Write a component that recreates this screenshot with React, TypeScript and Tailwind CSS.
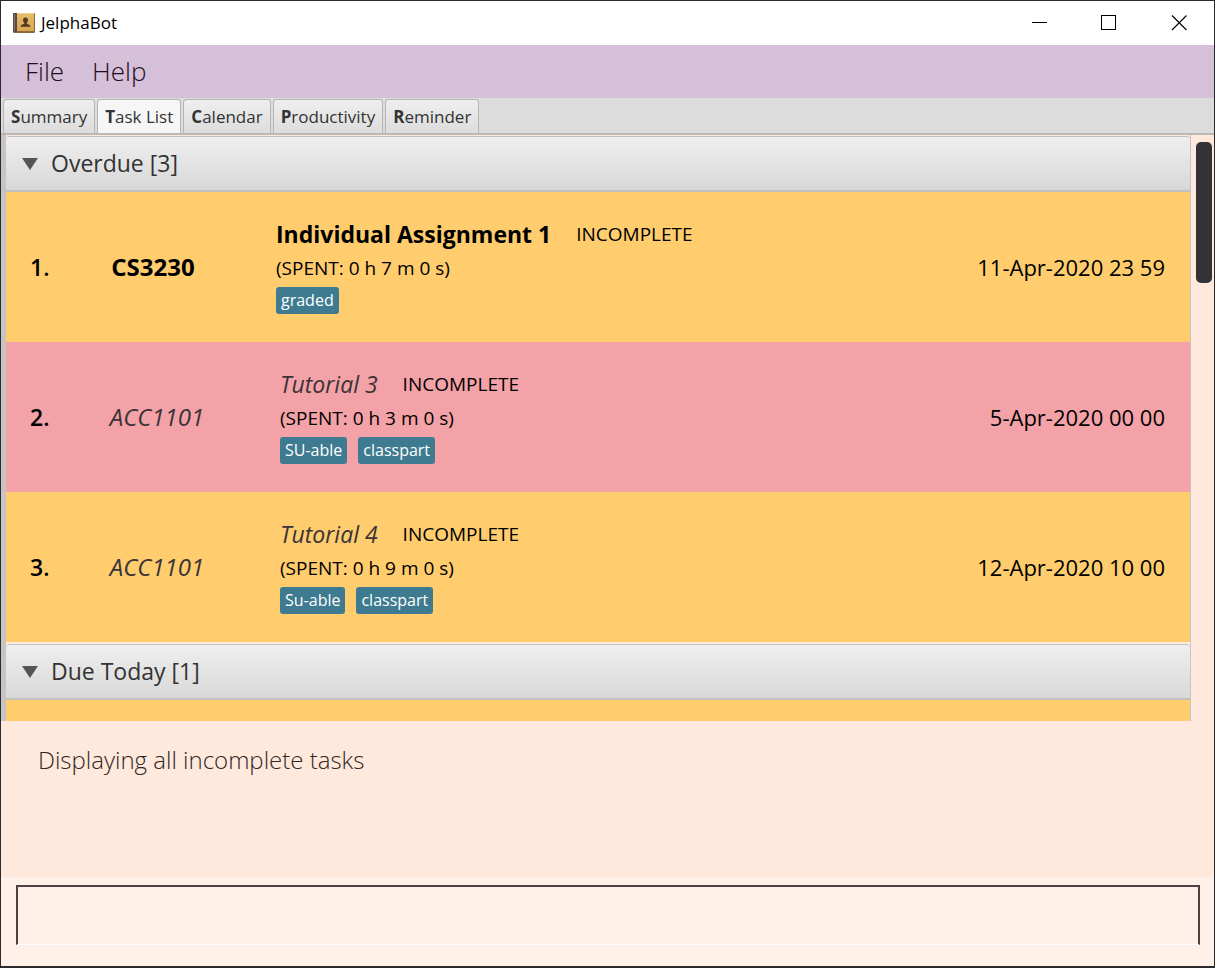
import { useState } from "react";

type Task = {
  index: number;
  module: string;
  title: string;
  spent: string;
  tags: string[];
  due: string;
  style: "strong" | "soft";
  tone: "amber" | "rose";
};

type Group = { title: string; tasks: Task[] };

const GROUPS: Group[] = [
  {
    title: "Overdue [3]",
    tasks: [
      { index: 1, module: "CS3230", title: "Individual Assignment 1", spent: "(SPENT: 0 h 7 m 0 s)", tags: ["graded"], due: "11-Apr-2020 23 59", style: "strong", tone: "amber" },
      { index: 2, module: "ACC1101", title: "Tutorial 3", spent: "(SPENT: 0 h 3 m 0 s)", tags: ["SU-able", "classpart"], due: "5-Apr-2020 00 00", style: "soft", tone: "rose" },
      { index: 3, module: "ACC1101", title: "Tutorial 4", spent: "(SPENT: 0 h 9 m 0 s)", tags: ["Su-able", "classpart"], due: "12-Apr-2020 10 00", style: "soft", tone: "amber" },
    ],
  },
  { title: "Due Today [1]", tasks: [] },
];

const TABS = ["Summary", "Task List", "Calendar", "Productivity", "Reminder"];

function AppIcon() {
  return (
    <svg width="22" height="22" viewBox="0 0 22 22" aria-hidden="true">
      <defs>
        <linearGradient id="cover" x1="0" y1="0" x2="0" y2="1">
          <stop offset="0" stopColor="#e6bd6c" />
          <stop offset="1" stopColor="#d9a650" />
        </linearGradient>
      </defs>
      <rect x="0" y="1" width="22" height="20" rx="1" fill="#8a6a3c" />
      <rect x="0" y="1" width="4" height="19" rx="1" fill="#5a4a42" />
      <rect x="1" y="2" width="1" height="17" fill="#85766c" />
      <rect x="4" y="1" width="17" height="18" fill="url(#cover)" />
      <rect x="4" y="1" width="17" height="1" fill="#f0d08c" />
      <path d="M12.500 5.500c1.700 0 2.500 1.200 2.500 2.700 0 1.200-.6 2-1.200 2.600v1.200c1.700.2 3.500.6 3.700 2.800H7.500c.2-2.200 2-2.600 3.700-2.800v-1.200c-.6-.6-1.200-1.400-1.200-2.600 0-1.500.8-2.700 2.500-2.700z" fill="#553a22" />
    </svg>
  );
}

function TitleBar() {
  return (
    <header className="flex h-11 shrink-0 items-center bg-white pl-3">
      <AppIcon />
      <h1 className="ml-1.5 flex-1 text-[17px] leading-6 text-black">JelphaBot</h1>
      <button type="button" aria-label="Minimize" className="flex h-11 w-[70px] items-center justify-center">
        <svg width="16" height="16" viewBox="0 0 16 16" aria-hidden="true" shapeRendering="crispEdges">
          <path d="M1 7.500h15" stroke="#000" />
        </svg>
      </button>
      <button type="button" aria-label="Maximize" className="flex h-11 w-[70px] items-center justify-center">
        <svg width="16" height="16" viewBox="0 0 16 16" fill="none" aria-hidden="true" shapeRendering="crispEdges">
          <path d="M.5 .5h14v14h-14z" stroke="#000" />
        </svg>
      </button>
      <button type="button" aria-label="Close" className="flex h-11 w-[70px] items-center justify-center">
        <svg width="16" height="16" viewBox="0 0 16 16" aria-hidden="true">
          <path d="M1 .5l14.500 14.500M15.500 .5l-14.500 14.500" stroke="#000" strokeWidth="1.100" />
        </svg>
      </button>
    </header>
  );
}

function TaskRow({ task }: { task: Task }) {
  const strong = task.style === "strong";
  const emphasis = strong ? "font-bold text-black" : "italic text-[#3a3338]";
  return (
    <li className={`flex h-[150px] items-center pr-[25px] pl-6 text-black ${task.tone === "amber" ? "bg-[#ffcc6e]" : "bg-[#f3a2a7]"}`}>
      <span className={`text-[23px] leading-8 font-semibold ${task.index === 1 ? "w-4" : "w-5"}`}>{task.index}.</span>
      <span className={`w-[214px] text-center text-[24px] leading-8 ${emphasis}`}>{task.module}</span>
      <div className="ml-4 flex flex-1 flex-col">
        <div className="flex items-center gap-[25px]">
          <h3 className={`text-[23px] leading-9 ${emphasis}`}>{task.title}</h3>
          <span className="text-[19px] leading-9">INCOMPLETE</span>
        </div>
        <p className="text-[19px] leading-8">{task.spent}</p>
        <ul className="mt-[3px] mb-[5px] flex gap-[11px]">
          {task.tags.map((tag) => (
            <li key={tag} className="h-[27px] rounded-[3px] bg-[#3e7b91] px-[5px] text-[16px] leading-[27px] text-white">
              {tag}
            </li>
          ))}
        </ul>
      </div>
      <time className="text-[22px] leading-8">{task.due}</time>
    </li>
  );
}

function GroupPane({ group }: { group: Group }) {
  const [open, setOpen] = useState(true);
  return (
    <section className="mb-0.5">
      <h2>
        <button
          type="button"
          aria-expanded={open}
          onClick={() => setOpen(!open)}
          className="flex h-14 w-full items-center gap-[13px] rounded-t-[4px] border-t border-b-2 border-[#c2bfbf] bg-linear-to-b from-[#efefef] to-[#d8d8d8] pl-4 text-left text-[23px] text-[#333]"
        >
          <svg width="16" height="12" viewBox="0 0 16 12" aria-hidden="true" className={open ? "" : "-rotate-90"}>
            <path d="M0 0h16L8 12z" fill="#555" />
          </svg>
          {group.title}
        </button>
      </h2>
      {open && (
        <ul>
          {group.tasks.map((task) => (
            <TaskRow key={task.index} task={task} />
          ))}
          {group.tasks.length === 0 && <li className="h-[150px] bg-[#ffcc6e]" />}
        </ul>
      )}
    </section>
  );
}

export default function App() {
  const [tab, setTab] = useState("Task List");
  return (
    <div className="flex h-screen flex-col border border-b-2 border-[#2b2b2f] bg-[#ffe8dc] font-['Open_Sans','Noto_Sans',sans-serif]">
      <TitleBar />
      <nav className="flex h-[53px] shrink-0 items-center gap-7 bg-[#d6bfd8] pl-6 text-[26px] font-light text-[#1c101c]">
        <button type="button">File</button>
        <button type="button">Help</button>
      </nav>
      <div role="tablist" className="flex h-[37px] shrink-0 items-end gap-0.5 border-b-2 border-[#b9b9b9] bg-[#dcdcdc] pl-0.5">
        {TABS.map((name) => (
          <button
            key={name}
            type="button"
            role="tab"
            aria-selected={tab === name}
            onClick={() => setTab(name)}
            className={`h-[34px] rounded-t-[4px] border border-b-0 border-[#b5b5b5] px-[7px] text-[17px] text-[#333] ${
              tab === name ? "bg-[#f6f6f6]" : "bg-linear-to-b from-[#efefef] to-[#dcdcdc]"
            }`}
          >
            <b>{name[0]}</b>
            {name.slice(1)}
          </button>
        ))}
      </div>
      <main className="flex min-h-0 flex-1">
        <div className="min-w-0 flex-1 overflow-y-auto border-r border-l-5 border-[#c8c4c4] pt-px [scrollbar-width:none]">
          {GROUPS.map((group) => (
            <GroupPane key={group.title} group={group} />
          ))}
        </div>
        <div className="flex w-[23px] justify-end pt-[7px] pr-0.5" aria-hidden="true">
          <div className="h-[141px] w-4 rounded-[5px] bg-[#333236]" />
        </div>
      </main>
      <p className="h-[156px] shrink-0 px-[37px] pt-[21px] text-[24px] leading-9 font-light text-[#2f2624]">Displaying all incomplete tasks</p>
      <footer className="shrink-0 bg-[#fff0e8] pt-2 pr-3.5 pb-[21px] pl-[15px]">
        <input
          type="text"
          aria-label="Command"
          className="block h-[60px] w-full border-2 border-b border-t-[#4b4140] border-r-[#4b4140] border-b-white border-l-[#4b4140] bg-[#fdf0e6] px-3 text-[24px] outline-none"
        />
      </footer>
    </div>
  );
}
